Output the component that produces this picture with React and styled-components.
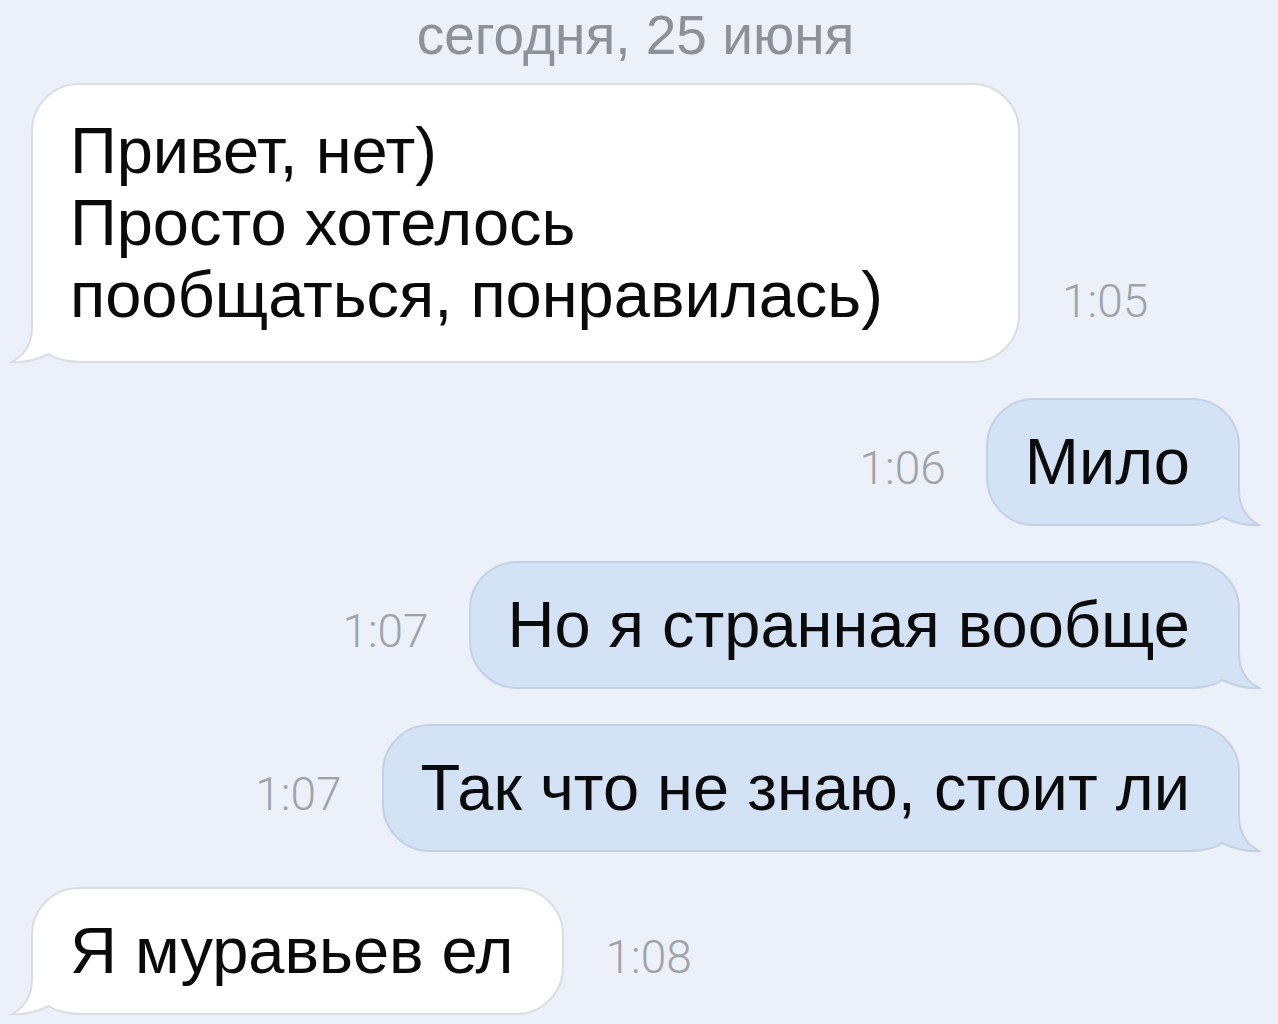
import styled, { createGlobalStyle } from 'styled-components';

const GlobalStyle = createGlobalStyle`
  html, body {
    margin: 0;
    padding: 0;
    background: #ebf0f9;
  }
`;

const messages = [
  { id: 1, out: false, time: '1:05', lines: ['Привет, нет)', 'Просто хотелось', 'пообщаться, понравилась)'], width: 989 },
  { id: 2, out: true, time: '1:06', lines: ['Мило'] },
  { id: 3, out: true, time: '1:07', lines: ['Но я странная вообще'] },
  { id: 4, out: true, time: '1:07', lines: ['Так что не знаю, стоит ли'] },
  { id: 5, out: false, time: '1:08', lines: ['Я муравьев ел'] },
];

const Tail = ({ out }) => (
  <TailSvg $out={out} width="80" height="56" viewBox="0 0 80 56">
    <path
      d="M23 0 V20 C23 36 16 48 3 55 C14 56 27 53 40 47 C46 52 56 55 80 55 V0 Z"
      fill={out ? '#d4e2f6' : '#ffffff'}
    />
    <path
      d="M23 0 V20 C23 36 16 48 3 55 C14 56 27 53 40 47 C46 52 56 55 80 55"
      fill="none"
      stroke={out ? '#c3d1e5' : '#dadde3'}
      strokeWidth="2"
    />
  </TailSvg>
);

const App = () => {
  return (
    <>
      <GlobalStyle />
      <Page>
        <DateLabel>сегодня, 25 июня</DateLabel>
        <Thread>
          {messages.map((m) => (
            <Row key={m.id} $out={m.out}>
              {m.out && <Time $out>{m.time}</Time>}
              <Bubble $out={m.out} $width={m.width} $multi={m.lines.length > 1}>
                <Text>
                  {m.lines.map((line, i) => (
                    <Line key={i}>{line}</Line>
                  ))}
                </Text>
                <Tail out={m.out} />
              </Bubble>
              {!m.out && <Time>{m.time}</Time>}
            </Row>
          ))}
        </Thread>
      </Page>
    </>
  );
};

const Page = styled.div`
  box-sizing: border-box;
  min-height: 1024px;
  padding: 4px 38px 0 31px;
  background: #ebf0f9;
  font-family: 'Liberation Sans', Arial, sans-serif;
  overflow: hidden;
`;

const DateLabel = styled.div`
  text-align: center;
  font-size: 55px;
  line-height: 62px;
  color: #8e9197;
  margin-bottom: 17px;
`;

const Thread = styled.div`
  display: flex;
  flex-direction: column;
  gap: 35px;
`;

const Row = styled.div`
  display: flex;
  align-items: last baseline;
  justify-content: ${({ $out }) => ($out ? 'flex-end' : 'flex-start')};
`;

const Bubble = styled.div`
  position: relative;
  box-sizing: border-box;
  width: ${({ $width }) => ($width ? `${$width}px` : 'auto')};
  padding: ${({ $multi }) => ($multi ? '30px' : '26px')} 48px
    ${({ $multi }) => ($multi ? '30px' : '26px')} 37px;
  border: 2px solid ${({ $out }) => ($out ? '#c3d1e5' : '#dadde3')};
  border-radius: 48px;
  background: ${({ $out }) => ($out ? '#d4e2f6' : '#ffffff')};
  color: #0a0a0a;
  font-size: 65px;
  line-height: 72px;
  white-space: nowrap;
`;

const Text = styled.div`
  position: relative;
  z-index: 1;
`;

const Line = styled.div``;

const TailSvg = styled.svg`
  position: absolute;
  bottom: -2px;
  ${({ $out }) => ($out ? 'right: -24px;' : 'left: -24px;')}
  transform: ${({ $out }) => ($out ? 'scaleX(-1)' : 'none')};
  overflow: visible;
`;

const Time = styled.span`
  font-family: Roboto, 'Liberation Sans', sans-serif;
  font-weight: 300;
  font-size: 46px;
  color: #9fa3a9;
  ${({ $out }) => ($out ? 'margin-right: 40px;' : 'margin-left: 42px;')}
`;

export default App;
